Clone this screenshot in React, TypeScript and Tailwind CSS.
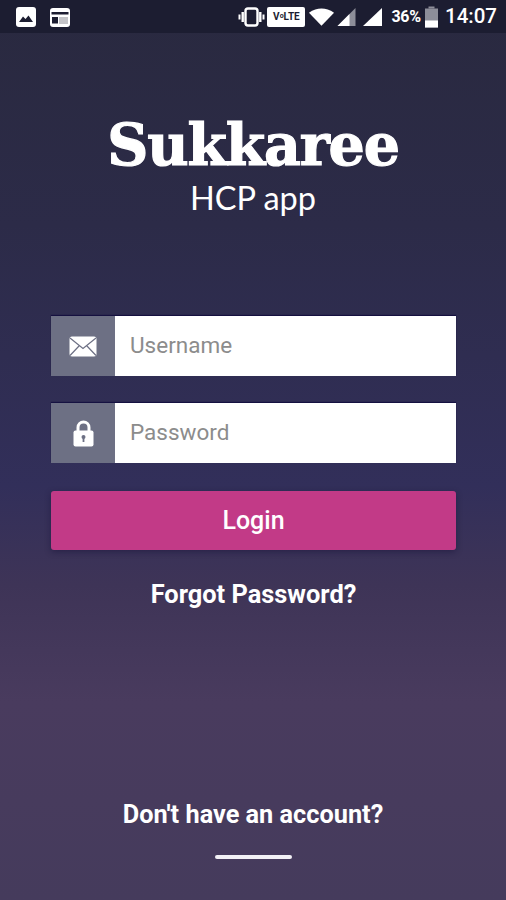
const roboto = { fontFamily: "Roboto, sans-serif" };

const StatusBar = () => {
    return (
        <div className="h-[33px] shrink-0 bg-[#1c1d31] flex items-center justify-between pl-[15px] pr-[9px] text-white">
            {/* Notification icons */}
            <div className="flex items-center gap-[12px]">
                <svg width="22" height="22" viewBox="0 0 22 22">
                    <rect x="1" y="1" width="20" height="20" rx="3" fill="#fff" />
                    <path d="M4 16 L8 10.5 L10.5 13 L13.5 9.5 L18 16 Z" fill="#1c1d31" />
                </svg>
                <svg width="22" height="22" viewBox="0 0 22 22">
                    <rect x="1" y="2" width="20" height="19" rx="3" fill="#fff" />
                    <rect x="2.5" y="6" width="17" height="2.5" fill="#1c1d31" />
                    <rect x="3" y="11" width="6" height="6.5" fill="#1c1d31" />
                    <rect x="10" y="11" width="9" height="7" fill="#c4c4c8" />
                </svg>
            </div>
            {/* System icons */}
            <div className="flex items-center">
                <svg width="27" height="20" viewBox="0 0 26 20">
                    <rect x="7" y="1.5" width="12" height="17" rx="2.5" fill="none" stroke="#fff" strokeWidth="2.4" />
                    <rect x="3" y="5" width="2.4" height="10" fill="#fff" />
                    <rect x="0" y="7.5" width="2" height="5" fill="#fff" />
                    <rect x="20.6" y="5" width="2.4" height="10" fill="#fff" />
                    <rect x="24" y="7.5" width="2" height="5" fill="#fff" />
                </svg>
                <div className="ml-[2px] w-[38px] h-[20px] bg-white rounded-[2px] flex items-center justify-center text-[#1c1d31] text-[10px] font-bold leading-none" style={roboto}>
                    V<span className="text-[7px]">o</span>LTE
                </div>
                <svg width="27" height="20" viewBox="0 0 28 20" className="ml-[3px]">
                    <path d="M1 5.5 Q14 -3 27 5.5 L14 19 Z" fill="#fff" />
                </svg>
                <svg width="21" height="20" viewBox="0 0 20 20" className="ml-[1px]">
                    <path d="M1 19 L19 1 V19 Z" fill="#8d8e99" />
                    <path d="M1 19 L13 7 V19 Z" fill="#fff" />
                </svg>
                <svg width="21" height="20" viewBox="0 0 21 20" className="ml-[5px]">
                    <path d="M1 19 L20 1 V19 Z" fill="#fff" />
                </svg>
                <span className="ml-[8px] text-[16px] font-bold tracking-[-0.2px]" style={roboto}>36%</span>
                <svg width="15" height="22" viewBox="0 0 15 22" className="ml-[3px]">
                    <rect x="4.5" y="0.5" width="6" height="2" fill="#8d8e99" />
                    <rect x="1" y="2.5" width="13" height="19" fill="#8d8e99" />
                    <rect x="1" y="14.5" width="13" height="7" fill="#fff" />
                </svg>
                <span className="ml-[6px] text-[20.5px] font-medium" style={roboto}>14:07</span>
            </div>
        </div>
    )
}

const Field = ({ icon, placeholder }: { icon: React.ReactNode, placeholder: string }) => {
    return (
        <div className="flex h-[60px] shadow-[0_-1px_1px_rgba(15,10,60,0.8)]">
            <div className="w-[64px] bg-[#6d7084] flex items-center justify-center">
                {icon}
            </div>
            <div className="flex-1 bg-white flex items-center pl-[15px] text-[22.5px] text-[#8c8c8c]" style={roboto}>
                {placeholder}
            </div>
        </div>
    )
}

const MailIcon = () => (
    <svg width="28" height="21" viewBox="0 0 28 21">
        <rect x="0.5" y="0.5" width="27" height="20" rx="2.5" fill="#fff" />
        <path d="M1 2 L14 12.5 L27 2 M1 19.5 L10.5 9.5 M27 19.5 L17.5 9.5" fill="none" stroke="#6d7084" strokeWidth="1.2" />
    </svg>
)

const LockIcon = () => (
    <svg width="21" height="27" viewBox="0 0 21 27">
        <path d="M5 11 V7.5 a5.5 5.5 0 0 1 11 0 V11" fill="none" stroke="#fff" strokeWidth="3" />
        <rect x="0.5" y="10.5" width="20" height="16" rx="2" fill="#fff" />
        <circle cx="10.5" cy="17" r="2" fill="#6d7084" />
        <rect x="9.6" y="17" width="1.8" height="5" fill="#6d7084" />
    </svg>
)

const App = () => {
    return (
        <div className="h-[900px] w-full flex flex-col overflow-hidden text-white bg-[linear-gradient(180deg,#29293f_0%,#2c2b48_25%,#322f5a_54%,#3e3457_65%,#493b5e_78%,#453b5c_100%)]">
            <StatusBar />

            {/* Logo */}
            <div className="flex flex-col items-center pt-[76px]">
                <h1 className="text-[57px] leading-[72px] font-bold tracking-[-1.2px] [-webkit-text-stroke:1.2px_white]" style={{ fontFamily: '"DejaVu Serif", serif' }}>Sukkaree</h1>
                <p className="text-[32.5px] leading-[36px] mt-[-1px]" style={{ fontFamily: "Lato, sans-serif" }}>HCP app</p>
            </div>

            {/* Form */}
            <div className="flex flex-col pl-[51px] pr-[50px] mt-[100px]">
                <Field placeholder="Username" icon={<MailIcon />} />
                <div className="mt-[27px]">
                    <Field placeholder="Password" icon={<LockIcon />} />
                </div>
                <button className="mt-[28px] h-[59px] rounded-[3px] bg-[#c23a87] text-[25px] font-medium shadow-[0_2px_6px_rgba(20,15,50,0.45)]" style={roboto}>
                    Login
                </button>
                <p className="mt-[26px] text-center text-[25.4px] leading-[36px] font-bold" style={roboto}>Forgot Password?</p>
            </div>

            {/* Footer */}
            <div className="mt-auto flex flex-col items-center pb-[41px]">
                <p className="text-[25.3px] leading-[32px] font-bold" style={roboto}>Don't have an account?</p>
                <div className="mt-[24px] w-[77px] h-[4px] bg-[#f2f0f5] rounded-full"></div>
            </div>
        </div>
    )
}

export default App;
